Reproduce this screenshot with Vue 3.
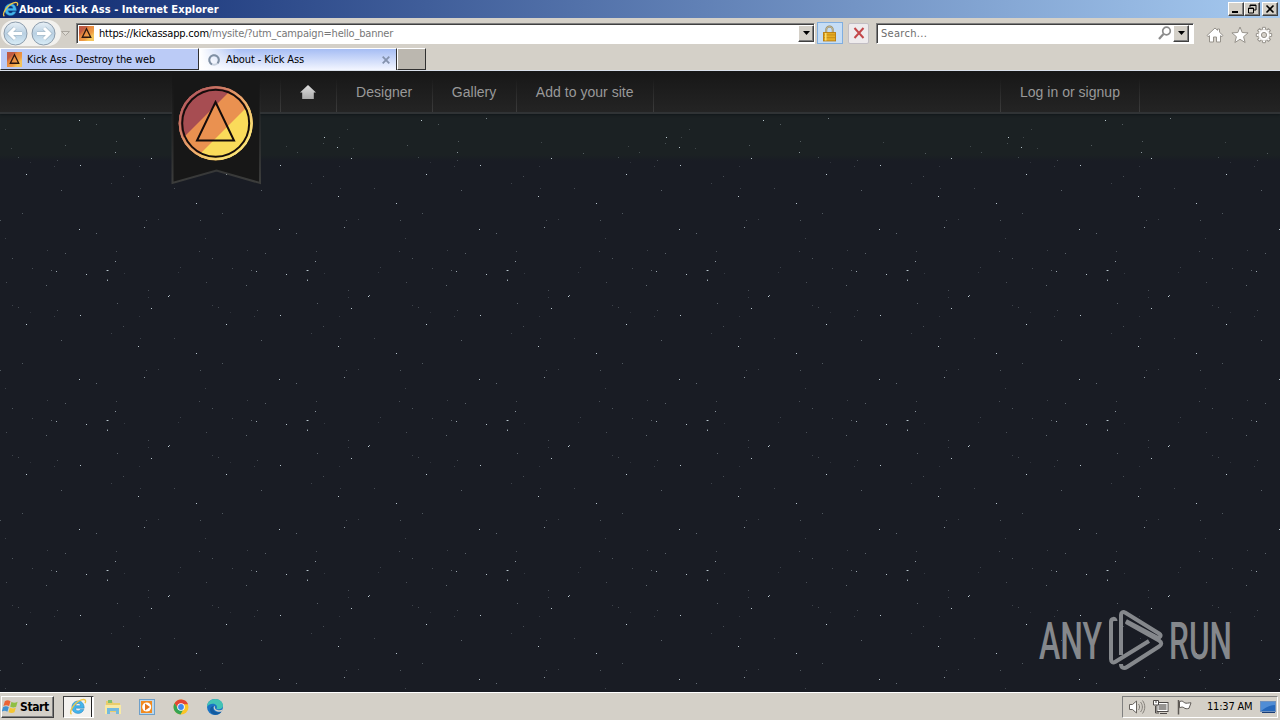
<template>
  <div class="desktop">
    <header class="title-bar">
      <svg class="title-icon" viewBox="0 0 18 18">
        <use href="#ie-logo" />
      </svg>
      <span class="window-title">About - Kick Ass - Internet Explorer</span>
      <div class="window-buttons">
        <button><svg viewBox="0 0 14 12"><path d="M3 9h6" stroke="#000" stroke-width="2" /></svg></button>
        <button>
          <svg viewBox="0 0 14 12">
            <path d="M5 4V2h6v5H9M5 2.5h6M3 5.5h6" fill="none" stroke="#000" />
            <path d="M3.5 5v5h5V5z" fill="none" stroke="#000" />
          </svg>
        </button>
        <button class="close"><svg viewBox="0 0 14 12"><path d="M3.5 2.5l7 7m0-7l-7 7" stroke="#000" stroke-width="1.6" /></svg></button>
      </div>
    </header>

    <div class="nav-row">
      <svg class="history" viewBox="0 0 72 28">
        <defs>
          <linearGradient id="round" x1="0" y1="0" x2="0" y2="1">
            <stop offset="0" stop-color="#e9f1f7" />
            <stop offset=".5" stop-color="#b9d0e2" />
            <stop offset="1" stop-color="#d9edf7" />
          </linearGradient>
          <linearGradient id="emblem" x1="0" y1="0" x2="1" y2="1">
            <stop offset=".25" stop-color="#c05a42" />
            <stop offset=".38" stop-color="#e5853f" />
            <stop offset=".64" stop-color="#ee9c45" />
            <stop offset=".78" stop-color="#f5c55c" />
          </linearGradient>
          <g id="ie-logo">
            <path d="M14.8 11.4c-.9 2.5-3 4-5.7 4-3.7 0-6.2-2.5-6.2-6.1s2.6-6.3 6.2-6.3c3.8 0 6.1 2.7 6.1 7.2H6.5c.1 1.7 1.1 2.6 2.7 2.6 1 0 1.7-.4 2.1-1.4zM6.6 7.7h5C11.5 6.3 10.6 5.4 9.2 5.4S6.8 6.3 6.6 7.7z" fill="#43b5ec" stroke="#247bb7" stroke-width=".5" />
            <path d="M2.5 16.2C-.4 14 5.2 4.4 12.3 1.9c4-1.3 5 .6 3.7 3.2" fill="none" stroke="#f0c747" stroke-width="1.4" />
          </g>
        </defs>
        <rect x="0" y="1" width="60" height="26" rx="13" fill="#f2f1ee" />
        <circle cx="14.5" cy="14.5" r="11.5" fill="url(#round)" stroke="#8c9cac" />
        <circle cx="42.5" cy="14.5" r="11.5" fill="url(#round)" stroke="#8c9cac" />
        <path d="M14 9l-5.5 5.5L14 20M9 14.5h12" fill="none" stroke="#a9bdcc" stroke-width="4.5" />
        <path d="M14 9l-5.5 5.5L14 20M9 14.5h12" fill="none" stroke="#fff" stroke-width="3" />
        <path d="M43 9l5.5 5.5L43 20M48 14.5H36" fill="none" stroke="#a9bdcc" stroke-width="4.5" />
        <path d="M43 9l5.5 5.5L43 20M48 14.5H36" fill="none" stroke="#fff" stroke-width="3" />
        <path d="M60.5 12.5h8l-4 4z" fill="#dedbd4" stroke="#aaa69e" />
      </svg>
      <div class="address field">
        <svg class="favicon" viewBox="0 0 16 16">
          <rect width="16" height="16" fill="url(#emblem)" />
          <path d="M8 3l4.5 9h-9z" fill="none" stroke="#2b1710" stroke-width="1.4" />
        </svg>
        <span class="url"><b>https://kickassapp.com</b>/mysite/?utm_campaign=hello_banner</span>
        <button class="drop"><svg viewBox="0 0 9 5"><path d="M1 0h7L4.5 4z" /></svg></button>
      </div>
      <div class="lock">
        <svg viewBox="0 0 14 17">
          <path d="M3.5 8V4.5a3.5 3.5 0 017 0V8" fill="none" stroke="#8e815c" stroke-width="2" />
          <path d="M3.5 8V4.5a3.5 3.5 0 017 0V8" fill="none" stroke="#e6dcb4" stroke-width=".7" />
          <rect x=".5" y="7.5" width="13" height="9" fill="#e7ad24" stroke="#b97c0e" />
          <path d="M1 10h12M1 13h12" stroke="#c58b17" />
          <path d="M3 8v8" stroke="#fae27b" stroke-width="1.5" />
        </svg>
      </div>
      <div class="stop">
        <svg viewBox="0 0 12 12"><path d="M1.5 1l9 10M10.5 1l-9 10" stroke="#c3474a" stroke-width="2" /></svg>
      </div>
      <div class="search field">
        <span>Search...</span>
        <svg class="magnifier" viewBox="0 0 14 14"><circle cx="8.5" cy="5" r="3.8" fill="#fff" stroke="#8b8b8b" stroke-width="1.7" /><path d="M5.5 8l-4.5 5" stroke="#8b8b8b" stroke-width="2.2" /></svg>
        <button class="drop"><svg viewBox="0 0 9 5"><path d="M1 0h7L4.5 4z" /></svg></button>
      </div>
      <div class="tools">
        <svg viewBox="0 0 18 18"><path d="M9 2l2.5 2.3V3h2v3.2L17 9.5l-1 1.2-1.5-1V16h-4v-5h-3v5h-4V9.7l-1.5 1-1-1.2z" fill="#fff" stroke="#96928b" /></svg>
        <svg viewBox="0 0 18 18"><path d="M9 1l2.2 5.5 5.9.4-4.5 3.8 1.5 5.8L9 13.3l-5.1 3.2 1.5-5.8L.9 6.9l5.9-.4z" fill="#fff" stroke="#96928b" /></svg>
        <svg viewBox="0 0 18 18">
          <path v-for="n in 8" :key="n" d="M7.3 4l.3-2.7h2.8l.3 2.7" :transform="`rotate(${n * 45} 9 9)`" fill="#fff" stroke="#96928b" />
          <circle cx="9" cy="9" r="5.5" fill="#fff" stroke="#c2beb7" stroke-width=".5" />
          <circle cx="9" cy="9" r="2.6" fill="#d4d0c8" stroke="#96928b" />
        </svg>
      </div>
    </div>

    <div class="tab-row">
      <div class="tab first">
        <svg class="favicon" viewBox="0 0 16 16">
          <rect width="16" height="16" fill="url(#emblem)" />
          <path d="M8 3l4.5 9h-9z" fill="none" stroke="#2b1710" stroke-width="1.4" />
        </svg>
        <span class="tab-one">Kick Ass - Destroy the web</span>
      </div>
      <div class="tab active">
        <svg class="spinner" viewBox="0 0 14 14">
          <circle cx="7" cy="7" r="4.8" fill="none" stroke="#c9d2df" stroke-width="2" />
          <path d="M5 11.3A4.8 4.8 0 1110.5 10.3" fill="none" stroke="#8090a4" stroke-width="2" />
        </svg>
        <span class="tab-two">About - Kick Ass</span>
        <svg class="tab-close" viewBox="0 0 8 8"><path d="M.7.7l6.6 6.6m0-6.6L.7 7.3" stroke="#8492ad" stroke-width="1.8" /></svg>
      </div>
      <div class="new-tab"></div>
    </div>

    <main class="page">
      <svg class="stars" width="1280" height="621">
        <defs>
          <pattern id="sky" x="0" y="119" width="200" height="150" patternUnits="userSpaceOnUse">
            <rect v-for="(s, i) in stars" :key="i" :x="s[0]" :y="s[1]" width="1" height="1" fill="#d5e5ed" :opacity="s[2]" />
          </pattern>
          <pattern id="top-sky" x="0" y="43" width="342" height="42" patternUnits="userSpaceOnUse">
            <rect v-for="(s, i) in topStars" :key="i" :x="s[0]" :y="s[1]" width="1" height="1" fill="#d5e5ed" :opacity="s[2]" />
          </pattern>
        </defs>
        <rect y="43" width="1280" height="42" fill="url(#top-sky)" />
        <rect y="85" width="1280" height="536" fill="url(#sky)" />
      </svg>

      <nav class="site-nav">
        <a class="home"><svg viewBox="0 0 16 14"><path d="M8 0l8 7.5h-2.2V14H2.2V7.5H0z" fill="url(#metal)" /><defs><linearGradient id="metal" x2="0" y2="1"><stop stop-color="#dedede" /><stop offset="1" stop-color="#aaa" /></linearGradient></defs></svg></a>
        <a v-for="l in links" :key="l">{{ l }}</a>
        <a class="login">Log in or signup</a>
      </nav>

      <svg class="ribbon" viewBox="0 0 92 116">
        <defs>
          <linearGradient id="edge" x2="0" y2="1">
            <stop offset=".1" stop-color="#303030" stop-opacity="0" />
            <stop offset="1" stop-color="#3c3d3c" />
          </linearGradient>
          <linearGradient id="ring" x1="0" y1="0" x2="1" y2="1">
            <stop offset=".15" stop-color="#b9605f" />
            <stop offset=".5" stop-color="#eba66e" />
            <stop offset=".8" stop-color="#f8e07a" />
          </linearGradient>
          <clipPath id="disc"><circle cx="45.7" cy="52.2" r="37" /></clipPath>
        </defs>
        <path d="M2 0h88v113L46.5 99 2 113z" fill="#171717" />
        <path d="M2.5 0v112L46.5 99.5l43.5 12.5V0" fill="none" stroke="url(#edge)" stroke-width="2" />
        <g clip-path="url(#disc)">
          <rect x="8" y="14" width="76" height="77" fill="#ea9150" />
          <path d="M0 80L80 0H0z" fill="#a74d52" />
          <path d="M22 91l69-69v69z" fill="#fadb5a" />
        </g>
        <circle cx="45.7" cy="52.2" r="36" fill="none" stroke="url(#ring)" stroke-width="2" />
        <circle cx="45.7" cy="52.2" r="33.5" fill="none" stroke="#150c0b" stroke-width="2" />
        <path d="M45.5 31l18.500 38.500H27z" fill="none" stroke="#150c0b" stroke-width="2" />
      </svg>

      <svg class="watermark" viewBox="0 0 220 76">
        <g fill="#85888c">
          <text x="1" y="56" textLength="63" lengthAdjust="spacingAndGlyphs">ANY</text>
          <text x="131" y="56" textLength="63" lengthAdjust="spacingAndGlyphs">RUN</text>
        </g>
        <g fill="none" stroke="#85888c" stroke-width="4" stroke-linejoin="round">
          <path d="M77.5 18c0-3-4.500-3-4.500 1v37c0 3 2 4 4 3l34-21" />
          <path d="M83 52V12c0-2 2-4 4-2.500l34 21c3 2 1 5-2 4L88 18" />
          <path d="M88 19l33 18.500c3 2 3 4 0 6L89 64c-3 2-6 1-6-3" />
        </g>
      </svg>
    </main>

    <footer class="taskbar">
      <button class="start">
        <svg viewBox="0 0 18 16">
          <path d="M3 2c2-1.5 4-1.2 6 0L7.5 7c-2-1.2-4-1.3-6 0z" fill="#ec6334" />
          <path d="M10 2.5c2 1.2 4 1.2 6.5 0L15 7.7c-2 1.2-4 1.1-6.3 0z" fill="#8fbf43" />
          <path d="M1.2 8c2-1.2 4-1.1 6 0l-1.5 5c-2-1.2-4-1.3-6 0z" fill="#3f91d1" />
          <path d="M8.4 8.600c2 1.2 4 1.2 6.3 0l-1.5 5c-2 1.2-4 1.1-6.3 0z" fill="#f5c632" />
        </svg>
        Start
      </button>
      <div class="running">
        <svg viewBox="0 0 18 18"><use href="#ie-logo" /></svg>
      </div>
      <div class="quick-launch">
        <svg viewBox="0 0 18 18">
          <path d="M2 3h6l1.5 2H16v9H2z" fill="#e9cd6b" />
          <path d="M4 2h4v3H4z" fill="#81bf6b" />
          <path d="M1 7h16v9h-3v-5H5v5H1z" fill="#f7e9a5" />
          <path d="M3 16v-6h12v6h-3v-3H6v3z" fill="#74bade" />
        </svg>
        <svg viewBox="0 0 18 18">
          <rect x="1.5" y="1.5" width="15" height="15" fill="#b9d7ed" stroke="#6e9fc9" />
          <rect x="3" y="3" width="11" height="12" fill="#f28b20" />
          <circle cx="8.7" cy="9" r="4.5" fill="#fff" />
          <path d="M7 5.5l5 3.5-5 3.5z" fill="#e4761c" />
        </svg>
        <svg viewBox="0 0 18 18">
          <circle cx="9" cy="9" r="7.5" fill="#fbc526" />
          <path d="M2.5 5.3A7.5 7.5 0 0116 6.2H9L6.3 11z" fill="#e34535" />
          <path d="M2.5 5.3A7.5 7.5 0 008.5 16.5l3.2-5.7H6.2z" fill="#35a454" />
          <circle cx="9" cy="9" r="3.8" fill="#fff" />
          <circle cx="9" cy="9" r="2.9" fill="#4088ec" />
        </svg>
        <svg viewBox="0 0 18 18">
          <circle cx="9" cy="9" r="8" fill="#1b74c4" />
          <path d="M1 9C1 3.8 5 1 9.2 1c5 0 8 3.5 7.8 6.7-.2 3-3 4.1-6.5 3.2 1.5-2.6-.6-5.2-3.6-5.2C4 5.7 1.7 7.3 1 9z" fill="#43c3b5" />
          <path d="M7.5 8c-2 4.5 2.8 8 8 5.8-3 4.5-10.8 3.8-11.4-1.5C3.9 10 5.3 8.4 7.5 8z" fill="#145b9e" />
          <path d="M9 7.7c-.5 2 .1 3.8 2.5 4.4 2 .5 4 .1 5.5-1l-1.3 2.3c-4 1.2-8.4-.8-8-4.5z" fill="#d4d0c8" />
        </svg>
      </div>
      <div class="tray">
        <svg class="volume" viewBox="0 0 18 16"><path d="M1.5 5.5h3L8.5 2v12l-4-3.5h-3z" fill="#fff" stroke="#68645f" /><path d="M10.5 5c1.5 2 1.5 4 0 6M12.5 3c2.5 3 2.5 7 0 10M14.5 1.5c3 4 3 9 0 13" fill="none" stroke="#85817b" /></svg>
        <svg class="network" viewBox="0 0 18 16"><rect x="5" y="3.5" width="11" height="9" fill="#969492" stroke="#4c4947" /><rect x="6" y="4.5" width="9" height="7" fill="none" stroke="#fff" /><path d="M8 14.5h7M3.5 7v7H7" fill="none" stroke="#4c4947" /><path d="M1.5 1.5h5V6h-5z" fill="#fff" stroke="#4c4947" /><path d="M4 1v3" stroke="#4c4947" /></svg>
        <svg class="flag" viewBox="0 0 18 16"><path d="M2.5 1v14.5" stroke="#5d5955" stroke-width="1.5" /><path d="M3.5 2.5c3-1 4 .2 5 1.3 2 1 4-.1 6.5 0l-2 5.5c-2 .8-4 .4-5-.5s-2.5-1-4.5 0z" fill="#fff" stroke="#5d5955" /></svg>
        <span class="clock">11:37 AM</span>
        <svg class="show-desktop" viewBox="0 0 16 14"><rect x=".5" y="1.5" width="15" height="10" fill="#2668bb" stroke="#6f91bd" /><path d="M1 2h14v3C9 5 5 8 1 11z" fill="#508dd5" /><path d="M2 12.5h13" stroke="#183d76" /></svg>
      </div>
    </footer>
  </div>
</template>

<script setup>
const links = ['Designer', 'Gallery', 'Add to your site']

// x, y and brightness inside one 200 x 150 background tile
const stars = [
  [138, 6, 0.85], [196, 13, 0.85], [79, 39, 0.85], [144, 37, 0.6],
  [107, 80, 0.85], [108, 80, 0.4], [106, 80, 0.35], [107, 90, 0.7], [107, 89, 0.3],
  [86, 84, 0.85], [168, 106, 0.9], [169, 105, 0.6], [151, 118, 0.85],
  [80, 125, 0.85], [26, 134, 0.9], [56, 81, 0.7], [51, 80, 0.35],
  [115, 71, 0.6], [46, 95, 0.4], [65, 63, 0.35], [12, 68, 0.3],
  [96, 43, 0.4], [61, 0, 0.35], [22, 23, 0.3], [0, 30, 0.3],
  [5, 48, 0.2], [32, 78, 0.25], [6, 92, 0.25], [47, 60, 0.2],
  [116, 61, 0.25], [117, 113, 0.35], [57, 120, 0.25], [12, 115, 0.2],
  [18, 117, 0.25], [123, 136, 0.25], [174, 148, 0.25], [111, 143, 0.2],
  [146, 30, 0.25], [158, 29, 0.2], [148, 100, 0.25], [148, 107, 0.18],
  [199, 61, 0.25], [180, 77, 0.18], [54, 126, 0.18], [140, 148, 0.18],
  [30, 122, 0.12], [139, 126, 0.15], [124, 83, 0.15], [178, 82, 0.15]
]

// wider tile for the strip right under the navigation
const topStars = [
  [79, 6, 0.85], [324, 23, 0.85], [337, 33, 0.8], [96, 10, 0.3],
  [5, 15, 0.2], [116, 27, 0.3], [65, 31, 0.3], [115, 38, 0.6],
  [11, 34, 0.2], [144, 4, 0.5], [241, 39, 0.3], [199, 28, 0.2],
  [286, 32, 0.2], [297, 38, 0.25], [323, 29, 0.25], [339, 23, 0.2]
]
</script>

<style>
body {
  margin: 0;
  overflow: hidden;
}
</style>

<style scoped>
.desktop {
  width: 1280px;
  height: 720px;
  display: flex;
  flex-direction: column;
  background: #d4d0c8;
  color: #000;
  font-family: 'DejaVu Sans Condensed', 'DejaVu Sans', sans-serif;
  font-size: 11px;
  box-sizing: border-box;
}

.desktop * {
  box-sizing: border-box;
}

svg {
  display: block;
  flex: none;
}

span {
  white-space: nowrap;
}

button {
  padding: 0;
  font: inherit;
  color: #000;
  background: #d4d0c8;
  border: 1px solid;
  border-color: #fff #404040 #404040 #fff;
  box-shadow: inset -1px -1px #808080;
}

.title-bar {
  height: 18px;
  flex: none;
  display: flex;
  align-items: center;
  padding: 0 2px;
  background: linear-gradient(90deg, #0d286f, #a6caf0);
  color: #fff;
}

.title-icon {
  width: 17px;
  height: 17px;
}

.window-title {
  font-weight: bold;
  letter-spacing: 0.06px;
}

.window-buttons {
  display: flex;
  margin-left: auto;
}

.window-buttons button {
  width: 16px;
  height: 14px;
}

.window-buttons svg {
  width: 14px;
  height: 12px;
}

.window-buttons .close {
  margin-left: 2px;
}

.nav-row {
  height: 30px;
  flex: none;
  display: flex;
  align-items: center;
}

.history {
  width: 72px;
  height: 28px;
  margin-left: 1px;
}

.field {
  height: 21px;
  display: flex;
  align-items: center;
  background: #fff;
  border: 1px solid;
  border-color: #808080 #fff #fff #808080;
  box-shadow: inset 1px 1px #404040;
}

.address {
  width: 739px;
  margin-left: 3px;
  padding-left: 2px;
}

.favicon {
  width: 15px;
  height: 15px;
}

.url {
  margin-left: 5px;
  color: #777;
  letter-spacing: -0.2px;
}

.url b {
  color: #000;
  font-weight: normal;
}

.drop {
  width: 16px;
  height: 17px;
  margin-left: auto;
  display: flex;
  align-items: center;
  justify-content: center;
}

.drop svg {
  width: 9px;
  height: 5px;
}

.lock {
  width: 26px;
  height: 22px;
  margin-left: 2px;
  display: flex;
  align-items: center;
  justify-content: center;
  background: #c6ddf5;
  border: 1px solid #80aee0;
}

.lock svg {
  width: 13px;
  height: 17px;
  margin-right: 1px;
}

.stop {
  width: 21px;
  height: 21px;
  margin-left: 5px;
  display: flex;
  align-items: center;
  justify-content: center;
  background: #eeebed;
  border: 1px solid #c2bec4;
  border-radius: 2px;
}

.stop svg {
  width: 12px;
  height: 12px;
}

.search {
  width: 318px;
  margin-left: 7px;
  padding: 0 4px;
  color: #6d6d6d;
}

.search span {
  letter-spacing: 0.3px;
}

.magnifier {
  width: 14px;
  height: 14px;
  margin-left: auto;
}

.search .drop {
  margin-left: 1px;
}

.tools {
  display: flex;
  gap: 6.5px;
  margin: 3px 0 0 12px;
}

.tools svg {
  width: 18px;
  height: 18px;
}

.tab-row {
  height: 23px;
  flex: none;
  display: flex;
  border-bottom: 1px solid #d9e0eb;
}

.tab {
  height: 22px;
  display: flex;
  align-items: center;
  border-top: 1px solid #fff;
  border-left: 1px solid #fff;
  border-right: 1px solid #303030;
}

.first {
  width: 199px;
  padding-left: 6px;
  background: #bbcbf6;
  border-bottom: 1px solid #303030;
}

.tab-one {
  margin-left: 5px;
  letter-spacing: -0.15px;
}

.active {
  width: 198px;
  padding: 0 6px 0 7px;
  background: linear-gradient(90deg, #fff 0, transparent 20%), linear-gradient(#a6bdf4, #f3f6ff);
}

.spinner {
  width: 14px;
  height: 14px;
}

.tab-two {
  margin-left: 5px;
  letter-spacing: -0.1px;
}

.tab-close {
  width: 8px;
  height: 8px;
  margin-left: auto;
}

.new-tab {
  width: 29px;
  height: 22px;
  background: #bbb7af;
  border: 1px solid;
  border-color: #fff #303030 #303030 #fff;
}

.page {
  position: relative;
  height: 621px;
  flex: none;
  overflow: hidden;
  background: linear-gradient(#1b2123 0, #1b2123 84px, #191c24 90px);
}

.stars {
  position: absolute;
  top: 0;
  left: 0;
}

.site-nav {
  position: relative;
  height: 43px;
  display: flex;
  padding: 0 140px 0 280px;
  background: linear-gradient(#171717, #242424);
  border-bottom: 2px solid #303335;
  box-shadow: 0 1px 2px #11171a;
  color: #999;
  font: 14px/42px 'Liberation Sans', Arial, sans-serif;
  letter-spacing: 0.03px;
}

.site-nav a {
  padding: 0 19.5px 0 19px;
  border-right: 1px solid;
  border-image: linear-gradient(transparent 20%, #3c3c3c) 1;
  white-space: nowrap;
}

.site-nav .home {
  width: 57px;
  display: flex;
  align-items: center;
  border-left: 1px solid;
}

.home svg {
  width: 16px;
  height: 14px;
}

.site-nav .login {
  margin-left: auto;
  padding-right: 19px;
  border-left: 1px solid;
}

.ribbon {
  position: absolute;
  left: 170px;
  top: 0;
  width: 92px;
  height: 116px;
}

.watermark {
  position: absolute;
  left: 1038px;
  top: 532px;
  width: 220px;
  height: 76px;
  overflow: visible;
}

.watermark text {
  font-family: Roboto, sans-serif;
  font-size: 52px;
  font-weight: 500;
}

.taskbar {
  height: 28px;
  flex: none;
  display: flex;
  align-items: center;
  border-top: 1px solid #fff;
}

.start {
  width: 53px;
  height: 22px;
  margin-left: 1px;
  display: flex;
  align-items: center;
  gap: 1px;
  font-size: 12px;
  font-weight: bold;
  letter-spacing: -0.4px;
}

.start svg {
  width: 17px;
  height: 16px;
}

.running {
  width: 31px;
  height: 22px;
  margin-left: 9px;
  padding: 1px 0 0 5px;
  background: linear-gradient(90deg, #f4f2ef 27px, #222 27px, #222 28px, #fff 28px);
  border: 1px solid;
  border-color: #404040 #fff #fff #404040;
}

.running svg {
  width: 18px;
  height: 18px;
}

.quick-launch {
  display: flex;
  gap: 16px;
  margin-left: 10px;
}

.quick-launch svg {
  width: 18px;
  height: 18px;
}

.tray {
  width: 156px;
  height: 22px;
  margin: 0 2px 0 auto;
  padding-left: 5px;
  display: flex;
  align-items: center;
  border: 1px solid;
  border-color: #808080 #fff #fff #808080;
}

.tray svg {
  width: 18px;
  height: 16px;
}

.network,
.flag {
  margin-left: 6px;
}

.clock {
  margin-left: 13px;
  width: 47px;
  letter-spacing: -0.2px;
}

.tray .show-desktop {
  width: 16px;
  height: 14px;
  margin-left: 6px;
}
</style>
